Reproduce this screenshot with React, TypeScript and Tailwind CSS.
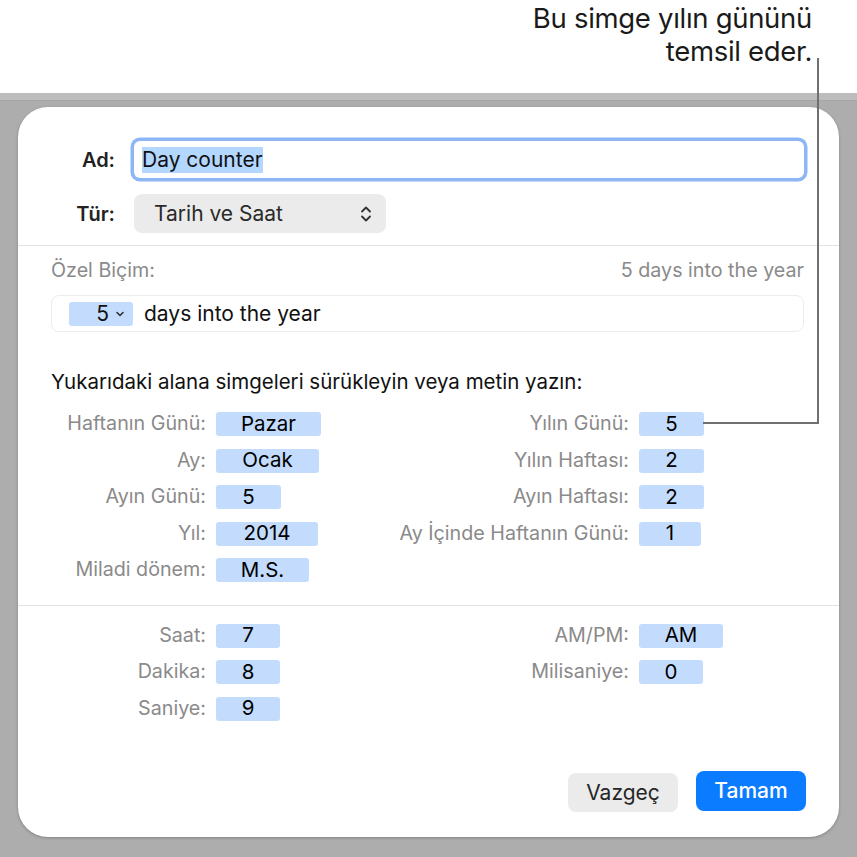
import React from "react";

type Field = { label: string; value: string; w: string };

const dateLeft: Field[] = [
  { label: "Haftanın Günü:", value: "Pazar", w: "w-[105px]" },
  { label: "Ay:", value: "Ocak", w: "w-[103px]" },
  { label: "Ayın Günü:", value: "5", w: "w-[65px]" },
  { label: "Yıl:", value: "2014", w: "w-[102px]" },
  { label: "Miladi dönem:", value: "M.S.", w: "w-[93px]" },
];

const dateRight: Field[] = [
  { label: "Yılın Günü:", value: "5", w: "w-[65px]" },
  { label: "Yılın Haftası:", value: "2", w: "w-[65px]" },
  { label: "Ayın Haftası:", value: "2", w: "w-[65px]" },
  { label: "Ay İçinde Haftanın Günü:", value: "1", w: "w-[62px]" },
];

const timeLeft: Field[] = [
  { label: "Saat:", value: "7", w: "w-[64px]" },
  { label: "Dakika:", value: "8", w: "w-[64px]" },
  { label: "Saniye:", value: "9", w: "w-[64px]" },
];

const timeRight: Field[] = [
  { label: "AM/PM:", value: "AM", w: "w-[84px]" },
  { label: "Milisaniye:", value: "0", w: "w-[64px]" },
];

function Token({ value, w }: { value: string; w: string }) {
  return (
    <div
      className={`${w} flex h-[24px] items-center justify-center rounded-[3px] bg-[#c3dcfd] text-[20.5px] text-black`}
    >
      {value}
    </div>
  );
}

function TokenColumn({ items, labelW }: { items: Field[]; labelW: string }) {
  return (
    <div className="flex flex-col">
      {items.map((item) => (
        <div key={item.label} className="flex h-[36.5px] items-center">
          <div
            className={`${labelW} flex justify-end whitespace-nowrap text-[19.7px] text-[#8a8a8a]`}
          >
            {item.label}
          </div>
          <div className="ml-[10px]">
            <Token value={item.value} w={item.w} />
          </div>
        </div>
      ))}
    </div>
  );
}

export default function App() {
  return (
    <div className="relative h-[857px] w-[857px] overflow-hidden bg-white font-['Inter','Liberation_Sans',sans-serif]">
      {/* callout */}
      <div className="flex h-[93px] flex-col items-end pr-[45px] pt-[2px] text-[27.5px] leading-[33px] tracking-[-0.3px] text-[#1a1a1a]">
        <span>Bu simge yılın gününü</span>
        <span>temsil eder.</span>
      </div>

      {/* app backdrop */}
      <div className="flex h-[764px] flex-col bg-[#adadad]">
        <div className="h-[8px] border-b border-[#a7a7a7] bg-[#bdbdbd]" />
        <div className="px-[18px] pt-[6px]">
          <div className="flex h-[730px] flex-col rounded-[30px] bg-white shadow-[0_1px_3px_rgba(0,0,0,0.25)]">
            {/* name + type */}
            <div className="flex flex-col gap-[16px] pr-[35px] pt-[34px]">
              <div className="flex items-center">
                <div className="w-[97px] text-right text-[20px] font-semibold text-[#222]">Ad:</div>
                <div className="ml-[19px] flex h-[37px] flex-1 items-center rounded-[6px] bg-white pl-[8px] ring-[3.5px] ring-[#8cb6f6]">
                  <span className="bg-[#b3d7ff] text-[21px] leading-[26px] text-[#111]">Day counter</span>
                </div>
              </div>
              <div className="flex items-center">
                <div className="w-[97px] text-right text-[20px] font-semibold text-[#222]">Tür:</div>
                <div className="ml-[19px] flex h-[39px] w-[252px] items-center justify-between rounded-[8px] bg-[#ebebeb] pl-[20px] pr-[14px] text-[21px] text-[#2a2a2a]">
                  <span>Tarih ve Saat</span>
                  <svg width="12" height="18" viewBox="0 0 12 18" fill="none" stroke="#333" strokeWidth="1.8" strokeLinecap="round" strokeLinejoin="round">
                    <path d="M2 6.5 L6 2.5 L10 6.5" />
                    <path d="M2 11.5 L6 15.5 L10 11.5" />
                  </svg>
                </div>
              </div>
            </div>

            <div className="mt-[12px] h-px bg-[#e3e3e3]" />

            {/* custom format */}
            <div className="pl-[33px] pr-[35px] pt-[13px]">
              <div className="flex h-[24px] items-center justify-between text-[19.7px] text-[#8a8a8a]">
                <span>Özel Biçim:</span>
                <span>5 days into the year</span>
              </div>
              <div className="mt-[12px] flex h-[37px] items-center rounded-[8px] border border-[#ececec] pl-[17px]">
                <div className="flex h-[24px] w-[64px] items-center justify-end gap-[7px] rounded-[3px] bg-[#c3dcfd] pr-[9px] text-[21px] text-[#111]">
                  <span>5</span>
                  <svg width="8" height="6" viewBox="0 0 8 6" fill="none" stroke="#333" strokeWidth="1.6" strokeLinecap="round" strokeLinejoin="round">
                    <path d="M1 1.5 L4 4.5 L7 1.5" />
                  </svg>
                </div>
                <span className="ml-[11px] text-[21px] text-[#111]">days into the year</span>
              </div>

              <div className="mt-[38px] h-[24px] whitespace-nowrap text-[20.5px] leading-[24px] text-[#111]">
                Yukarıdaki alana simgeleri sürükleyin veya metin yazın:
              </div>

              <div className="mt-[12px] flex">
                <div className="w-[358px]">
                  <TokenColumn items={dateLeft} labelW="w-[155px]" />
                </div>
                <TokenColumn items={dateRight} labelW="w-[220px]" />
              </div>
            </div>

            <div className="mt-[16px] h-px bg-[#e3e3e3]" />

            {/* time */}
            <div className="flex px-[33px] pt-[12px]">
              <div className="w-[358px]">
                <TokenColumn items={timeLeft} labelW="w-[155px]" />
              </div>
              <TokenColumn items={timeRight} labelW="w-[220px]" />
            </div>

            {/* buttons */}
            <div className="mt-auto flex items-end justify-end gap-[18px] pb-[25px] pr-[33px]">
              <button className="h-[39px] w-[110px] rounded-[8px] bg-[#ebebeb] text-[21px] text-[#262626]">
                Vazgeç
              </button>
              <button className="mb-[1px] h-[40px] w-[110px] rounded-[8px] bg-[#0b7bff] text-[21px] font-medium text-white">
                Tamam
              </button>
            </div>
          </div>
        </div>
      </div>

      {/* leader line */}
      <svg
        className="pointer-events-none absolute left-0 top-0"
        width="857"
        height="857"
        viewBox="0 0 857 857"
        fill="none"
      >
        <path d="M818 58 L818 423 L703 423" stroke="#707070" strokeWidth="2" />
      </svg>
    </div>
  );
}
